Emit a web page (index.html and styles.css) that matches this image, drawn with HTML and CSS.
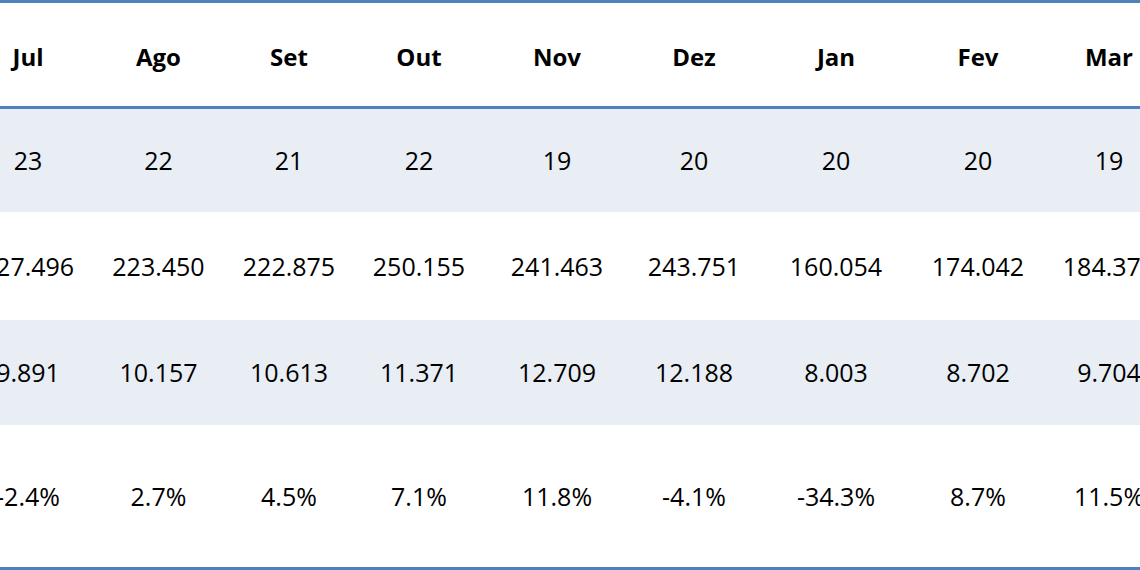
FILE: index.html
```html
<!DOCTYPE html>
<html lang="pt">
<head>
<meta charset="utf-8">
<link rel="stylesheet" href="styles.css">
</head>
<body>
<div class="frame">
<table class="data">
  <colgroup>
    <col class="c1"><col class="c2"><col class="c3"><col class="c4"><col class="c5"><col class="c6"><col class="c7"><col class="c8"><col class="c9">
  </colgroup>
  <thead>
    <tr class="head"><th>Jul</th><th>Ago</th><th>Set</th><th>Out</th><th>Nov</th><th>Dez</th><th>Jan</th><th>Fev</th><th>Mar</th></tr>
  </thead>
  <tbody>
    <tr class="r1 shade"><td>23</td><td>22</td><td>21</td><td>22</td><td>19</td><td>20</td><td>20</td><td>20</td><td>19</td></tr>
    <tr class="r2"><td>227.496</td><td>223.450</td><td>222.875</td><td>250.155</td><td>241.463</td><td>243.751</td><td>160.054</td><td>174.042</td><td>184.375</td></tr>
    <tr class="r3 shade"><td>9.891</td><td>10.157</td><td>10.613</td><td>11.371</td><td>12.709</td><td>12.188</td><td>8.003</td><td>8.702</td><td>9.704</td></tr>
    <tr class="r4"><td>-2.4%</td><td>2.7%</td><td>4.5%</td><td>7.1%</td><td>11.8%</td><td>-4.1%</td><td>-34.3%</td><td>8.7%</td><td>11.5%</td></tr>
  </tbody>
</table>
</div>
</body>
</html>
```
FILE: styles.css
```css
html, body {
  margin: 0;
  padding: 0;
  background: #ffffff;
}
.frame {
  width: 1140px;
  height: 570px;
  overflow: hidden;
}
.data {
  margin-left: -37px;
  border-collapse: collapse;
  table-layout: fixed;
  width: 1213px;
  font-family: "Open Sans", "Noto Sans", sans-serif;
  color: #000;
  border-top: 3px solid #4f81bd;
  border-bottom: 3px solid #4f81bd;
}
.c1 { width: 130px; }
.c2 { width: 131px; }
.c3 { width: 130px; }
.c4 { width: 130px; }
.c5 { width: 146px; }
.c6 { width: 128px; }
.c7 { width: 156px; }
.c8 { width: 128px; }
.c9 { width: 134px; }
.data th, .data td {
  padding: 0;
  text-align: center;
  vertical-align: middle;
  white-space: nowrap;
}
.data th {
  font-size: 24px;
  font-weight: 700;
  padding-top: 4px;
}
.data td {
  font-size: 25px;
  font-weight: 400;
}
.head {
  height: 106px;
  border-bottom: 3px solid #4f81bd;
}
.r1 { height: 104px; }
.r2 { height: 108px; }
.r3 { height: 105px; }
.r4 { height: 144px; }
.shade { background: #e9edf4; }
```
